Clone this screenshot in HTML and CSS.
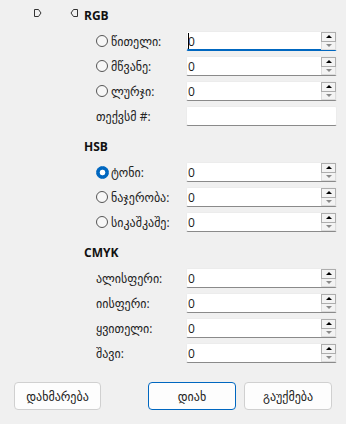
FILE: index.html
```html
<!DOCTYPE html>
<html lang="ka">
<head>
  <meta charset="UTF-8">
  <meta name="viewport" content="width=device-width, initial-scale=1">
  <title>ფერის არჩევა</title>
  <link rel="stylesheet" href="styles.css">
</head>
<body>

  <div class="dialog">
    <div class="top">
      <div class="sliders">
        <svg class="thumb" width="8" height="8" viewBox="0 0 8 8"><path d="M0.5 0.5H4.5L7 4L4.5 7.5H0.5Z" fill="none" stroke="#333"/></svg>
        <svg class="thumb" width="8" height="8" viewBox="0 0 8 8"><path d="M7.5 0.5H3.5L1 4L3.5 7.5H7.5Z" fill="none" stroke="#333"/></svg>
      </div>

      <form class="fields">
        <section class="group">
          <h3>RGB</h3>
          <div class="row">
            <label class="lbl"><input type="radio" name="mode"> წითელი:</label>
            <div class="num focused"><input type="text" value="0"><span class="caret"></span><span class="spin"><span class="up"></span><span class="down"></span></span></div>
          </div>
          <div class="row">
            <label class="lbl"><input type="radio" name="mode"> მწვანე:</label>
            <div class="num"><input type="text" value="0"><span class="spin"><span class="up"></span><span class="down"></span></span></div>
          </div>
          <div class="row">
            <label class="lbl"><input type="radio" name="mode"> ლურჯი:</label>
            <div class="num"><input type="text" value="0"><span class="spin"><span class="up"></span><span class="down"></span></span></div>
          </div>
          <div class="row">
            <label class="lbl">თექვსმ #:</label>
            <div class="num"><input type="text" value=""></div>
          </div>
        </section>

        <section class="group">
          <h3>HSB</h3>
          <div class="row">
            <label class="lbl"><input type="radio" name="mode" checked> ტონი:</label>
            <div class="num"><input type="text" value="0"><span class="spin"><span class="up"></span><span class="down"></span></span></div>
          </div>
          <div class="row">
            <label class="lbl"><input type="radio" name="mode"> ნაჯერობა:</label>
            <div class="num"><input type="text" value="0"><span class="spin"><span class="up"></span><span class="down"></span></span></div>
          </div>
          <div class="row">
            <label class="lbl"><input type="radio" name="mode"> სიკაშკაშე:</label>
            <div class="num"><input type="text" value="0"><span class="spin"><span class="up"></span><span class="down"></span></span></div>
          </div>
        </section>

        <section class="group">
          <h3>CMYK</h3>
          <div class="row">
            <label class="lbl">ალისფერი:</label>
            <div class="num"><input type="text" value="0"><span class="spin"><span class="up"></span><span class="down"></span></span></div>
          </div>
          <div class="row">
            <label class="lbl">იისფერი:</label>
            <div class="num"><input type="text" value="0"><span class="spin"><span class="up"></span><span class="down"></span></span></div>
          </div>
          <div class="row">
            <label class="lbl">ყვითელი:</label>
            <div class="num"><input type="text" value="0"><span class="spin"><span class="up"></span><span class="down"></span></span></div>
          </div>
          <div class="row">
            <label class="lbl">შავი:</label>
            <div class="num"><input type="text" value="0"><span class="spin"><span class="up"></span><span class="down"></span></span></div>
          </div>
        </section>
      </form>
    </div>

    <div class="actions">
      <button class="btn help">დახმარება</button>
      <button class="btn default">დიახ</button>
      <button class="btn">გაუქმება</button>
    </div>
  </div>

</body>
</html>
```

FILE: styles.css
```css
* {
  box-sizing: border-box;
}
body {
  margin: 0;
  background: #f0f0f0;
  font-family: "Open Sans", "DejaVu Sans", sans-serif;
  font-size: 12px;
  color: #1b1b1b;
}
.dialog {
  width: 346px;
  height: 424px;
}
.top {
  display: flex;
}
.sliders {
  width: 84px;
  flex: none;
  display: flex;
  align-items: flex-start;
  gap: 28px;
  padding: 9px 0 0 34px;
}
.thumb {
  display: block;
}
.fields {
  flex: 1;
  margin: 0;
  padding: 6px 9px 0 12px;
  display: flex;
  flex-direction: column;
  gap: 11px;
}
.group {
  display: flex;
  flex-direction: column;
  gap: 5px;
}
.group h3 {
  margin: 0 0 0 -12px;
  height: 20px;
  line-height: 20px;
  font-size: 12px;
  font-weight: 700;
  color: #111;
}
.row {
  display: flex;
  align-items: center;
  height: 20px;
}
.lbl {
  width: 90px;
  flex: none;
  display: flex;
  align-items: center;
  gap: 3px;
  white-space: nowrap;
  overflow: hidden;
  color: #222;
}
.lbl input[type=radio] {
  appearance: none;
  -webkit-appearance: none;
  margin: 0;
  width: 12px;
  height: 12px;
  flex: none;
  border: 1px solid #555;
  border-radius: 50%;
  background: #f7f7f7;
}
.lbl input[type=radio]:checked {
  width: 13px;
  height: 13px;
  margin-right: -1px;
  border-color: #0067c0;
  background: radial-gradient(circle, #fff 2.5px, #0067c0 3.2px);
}
.num {
  position: relative;
  width: 151px;
  height: 20px;
  flex: none;
  display: flex;
  align-items: stretch;
  background: #fff;
  border: 1px solid #ececec;
  border-bottom-color: #8a8a8a;
  border-radius: 2px;
}
.num.focused {
  border-bottom-color: #0067c0;
  box-shadow: inset 0 -1px 0 #0067c0;
}
.num input {
  flex: 1;
  min-width: 0;
  border: 0;
  outline: 0;
  background: transparent;
  font: inherit;
  color: #1b1b1b;
  padding: 0 0 0 1px;
}
.caret {
  position: absolute;
  left: 1px;
  top: 1px;
  width: 1px;
  height: 16px;
  background: #000;
}
.spin {
  width: 15px;
  flex: none;
  display: flex;
  flex-direction: column;
}
.spin span {
  flex: 1;
  display: flex;
  align-items: center;
  justify-content: center;
  border: 1px solid #adadad;
  background: #f3f3f3;
}
.spin .down {
  border-color: #dcdcdc;
  border-top: 0;
}
.spin .up::before {
  content: "";
  border-left: 3px solid transparent;
  border-right: 3px solid transparent;
  border-bottom: 3px solid #000;
}
.spin .down::before {
  content: "";
  border-left: 3px solid transparent;
  border-right: 3px solid transparent;
  border-top: 3px solid #8a8a8a;
}
.actions {
  display: flex;
  gap: 8px;
  padding: 19px 14px 0;
}
.btn {
  width: 88px;
  height: 28px;
  border: 1px solid #d0d0d0;
  border-radius: 4px;
  background: #fdfdfd;
  font: inherit;
  color: #1b1b1b;
  padding: 0;
}
.btn.help {
  width: 87px;
  margin-right: auto;
}
.btn.default {
  border-color: #0067c0;
}
```
